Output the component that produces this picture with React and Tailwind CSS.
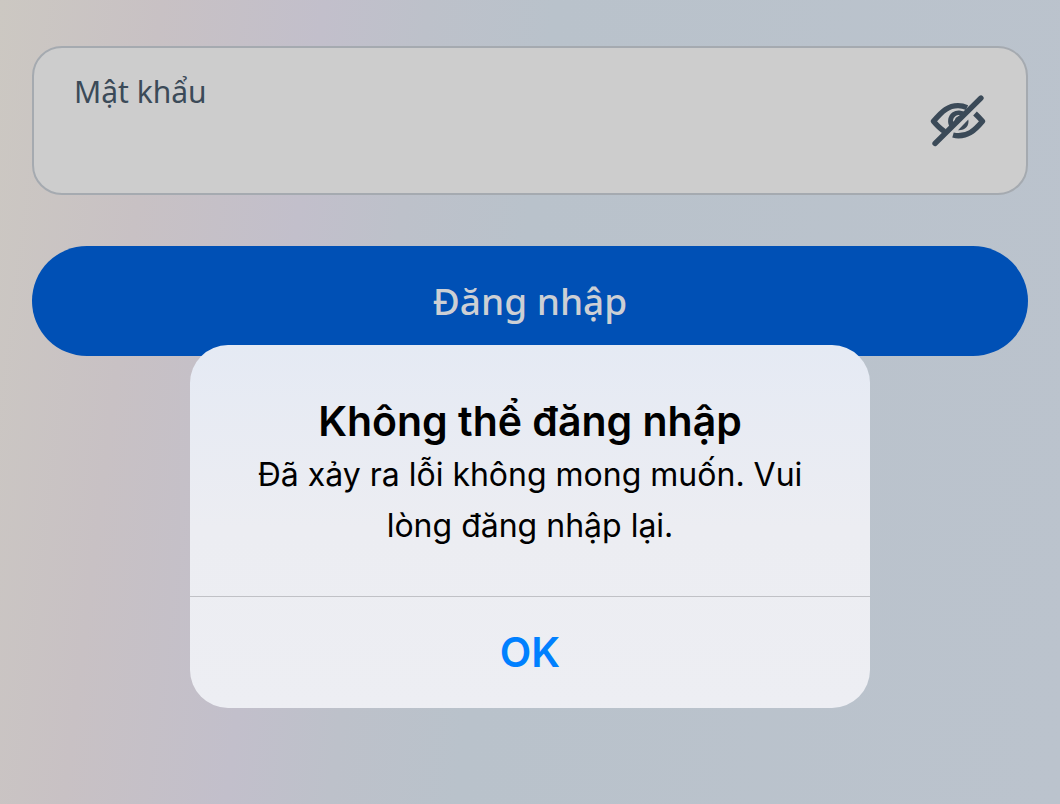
import { useState } from "react";

function EyeOffIcon() {
  return (
    <svg
      viewBox="0 0 56 52"
      className="h-[52px] w-14"
      fill="none"
      stroke="currentColor"
      strokeLinecap="round"
      strokeLinejoin="round"
      aria-hidden="true"
    >
      <path d="M5 48.500 51 3" strokeWidth="5.300" />
      <path
        d="M37 12.600C34 11.200 31 10.600 28 10.600C18.500 10.600 12.500 15.500 3.500 26.300C7 30.500 10.500 34 14.500 36.500"
        strokeWidth="5.400"
        strokeLinecap="butt"
      />
      <path
        d="M45 18.500C47.500 20.800 50 23.500 52.500 26.300C43.500 37 37.500 40.800 28.500 40.800C26.500 40.800 24.800 40.500 23 40"
        strokeWidth="5.400"
        strokeLinecap="butt"
      />
      <path d="M34.500 20C31.500 17.500 27 17.200 24 19.200C20 22 19.300 28 22.500 32" strokeWidth="4.800" strokeLinecap="butt" />
      <path d="M32 21C28 20.500 25 22.300 25 25.300C25 27 25.800 28.300 27 29Z" fill="currentColor" stroke="none" />
      <path d="M38.300 24.500C39.500 31 35 35.500 28 35.200Z" fill="currentColor" stroke="none" />
    </svg>
  );
}

export default function App() {
  const [visible, setVisible] = useState(false);
  const [open, setOpen] = useState(true);

  return (
    <main className="min-h-screen bg-[linear-gradient(97deg,#ccc8c2_0%,#c8c1c4_14%,#c2bfcb_28%,#bdc1ca_37%,#b9c2cb_48%,#bbc3cd_100%)] px-8 pt-[46px] pb-12 font-['Noto_Sans',sans-serif]">
      <form className="flex flex-col gap-[51px]" onSubmit={(e) => e.preventDefault()}>
        <div className="flex h-[149px] items-center rounded-[30px] border-2 border-[#a5aab0] bg-[#cdcdcd] px-10 text-[#3b4a58]">
          <div className="flex h-full min-w-0 grow flex-col pt-6">
            <label htmlFor="password" className="text-[30px] leading-10">
              Mật khẩu
            </label>
            <input
              id="password"
              type={visible ? "text" : "password"}
              className="h-12 w-full bg-transparent text-[30px] outline-none"
            />
          </div>
          <button type="button" aria-label="Hiện mật khẩu" onClick={() => setVisible(!visible)}>
            <EyeOffIcon />
          </button>
        </div>
        <button type="submit" className="h-[110px] rounded-full bg-[#0050b5] text-[37px] font-medium text-[#cccfd4]">
          Đăng nhập
        </button>
      </form>

      {open && (
        <div className="absolute inset-x-0 top-[345px] flex justify-center px-8">
          <div
            role="alertdialog"
            aria-labelledby="alert-title"
            aria-describedby="alert-text"
            className="w-full max-w-[680px] overflow-hidden rounded-[38px] bg-linear-to-b from-[#e5eaf4] via-[#ecedf2] via-50% to-[#edeef3] text-center font-['Inter',sans-serif] text-black"
          >
            <div className="px-14 pt-12 pb-[45px]">
              <h1 id="alert-title" className="text-[41px] leading-[56px] font-semibold">
                Không thể đăng nhập
              </h1>
              <p id="alert-text" className="text-[32px] leading-[51px]">
                Đã xảy ra lỗi không mong muốn. Vui lòng đăng nhập lại.
              </p>
            </div>
            <button
              type="button"
              onClick={() => setOpen(false)}
              className="h-28 w-full border-t border-[#c0c1c6] text-[41px] font-semibold text-[#0080ff]"
            >
              OK
            </button>
          </div>
        </div>
      )}
    </main>
  );
}
